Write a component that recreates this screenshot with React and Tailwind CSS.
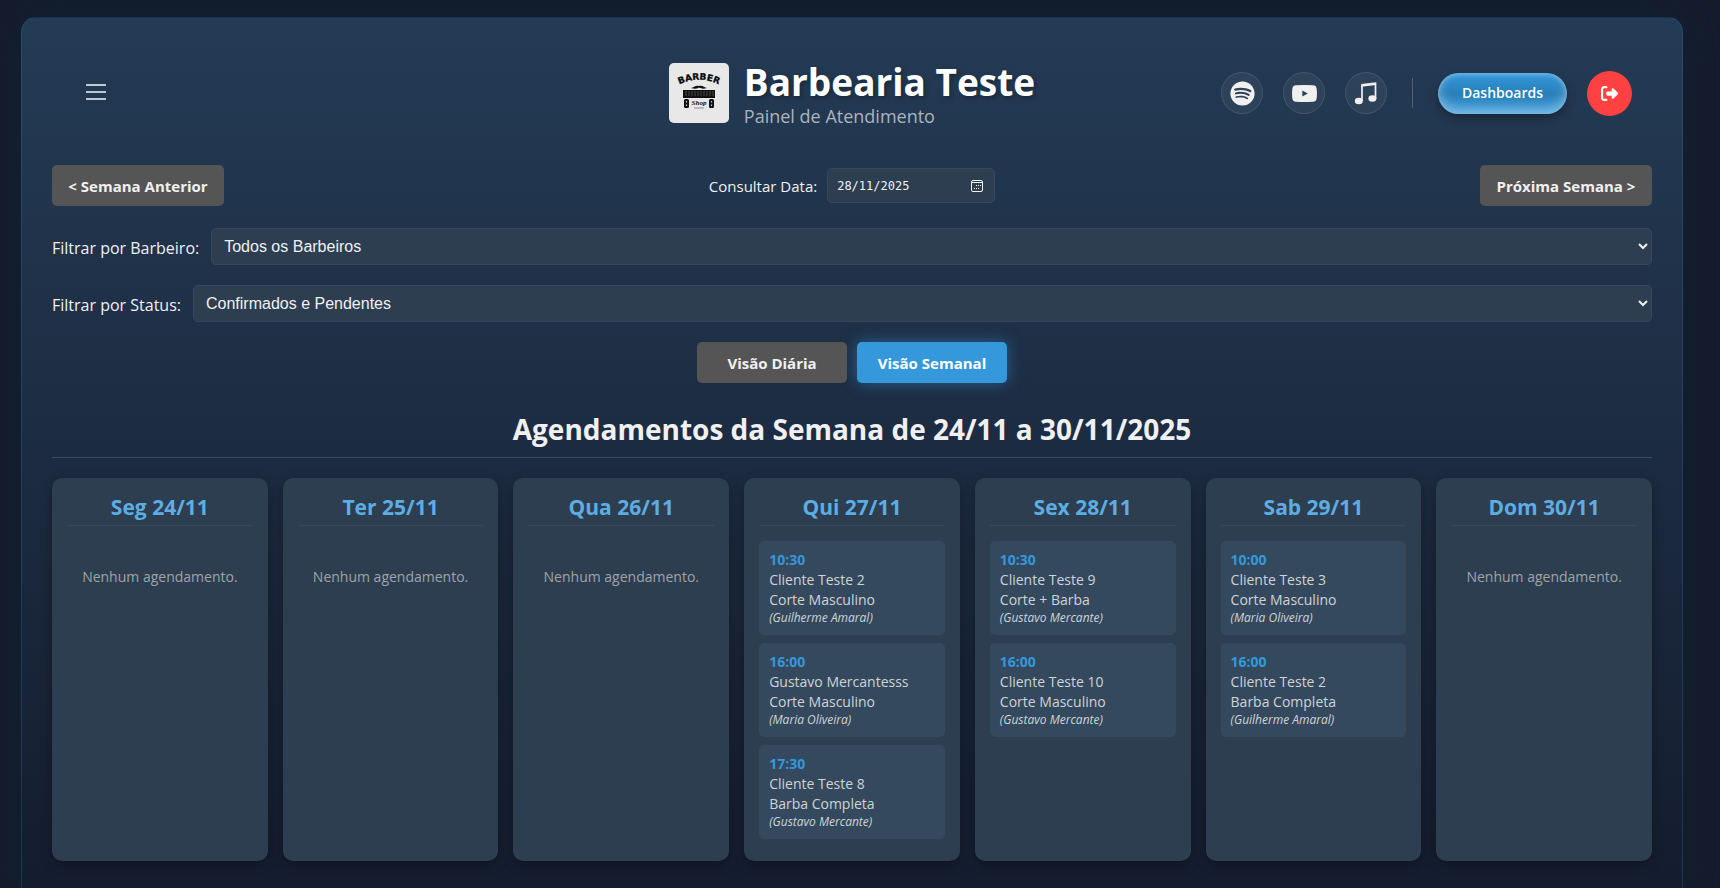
import React, { useState } from 'react';
import { FaSpotify } from 'react-icons/fa';
import { FaRightFromBracket } from 'react-icons/fa6';

const semana = [
  { dia: 'Seg 24/11', agendamentos: [] },
  { dia: 'Ter 25/11', agendamentos: [] },
  { dia: 'Qua 26/11', agendamentos: [] },
  {
    dia: 'Qui 27/11',
    agendamentos: [
      { hora: '10:30', cliente: 'Cliente Teste 2', servico: 'Corte Masculino', barbeiro: 'Guilherme Amaral' },
      { hora: '16:00', cliente: 'Gustavo Mercantesss', servico: 'Corte Masculino', barbeiro: 'Maria Oliveira' },
      { hora: '17:30', cliente: 'Cliente Teste 8', servico: 'Barba Completa', barbeiro: 'Gustavo Mercante' },
    ],
  },
  {
    dia: 'Sex 28/11',
    agendamentos: [
      { hora: '10:30', cliente: 'Cliente Teste 9', servico: 'Corte + Barba', barbeiro: 'Gustavo Mercante' },
      { hora: '16:00', cliente: 'Cliente Teste 10', servico: 'Corte Masculino', barbeiro: 'Gustavo Mercante' },
    ],
  },
  {
    dia: 'Sab 29/11',
    agendamentos: [
      { hora: '10:00', cliente: 'Cliente Teste 3', servico: 'Corte Masculino', barbeiro: 'Maria Oliveira' },
      { hora: '16:00', cliente: 'Cliente Teste 2', servico: 'Barba Completa', barbeiro: 'Guilherme Amaral' },
    ],
  },
  { dia: 'Dom 30/11', agendamentos: [] },
];

const Logo = () => (
  <svg viewBox="0 0 60 60" className="size-15 rounded-[5px] bg-[#e8e8e8]" role="img" aria-label="Barber Shop">
    <defs>
      <path id="arco" d="M7 23Q30 10.500 53 23" />
    </defs>
    <text fontFamily="'DejaVu Sans', sans-serif" fontWeight="700" fontSize="9" fill="#0a0a0a" stroke="#0a0a0a" strokeWidth="0.300">
      <textPath href="#arco" startOffset="50%" textAnchor="middle">BARBER</textPath>
    </text>
    <path d="M22 25c3 0 4-3 8-2 4-1 5 2 8 2-3 1-6 1-8-.5-2 1.500-5 1.500-8 .5z" fill="#111" />
    <rect x="14" y="27" width="32" height="8" fill="#111" />
    <path d="M17 28v5M20 28v5M23 28v5M26 28v5M29 28v5M32 28v5M35 28v5M38 28v5M41 28v5M44 28v5" stroke="#555" strokeWidth="0.800" />
    <rect x="15" y="36" width="5" height="9" rx="1.500" fill="#111" />
    <rect x="40" y="36" width="5" height="9" rx="1.500" fill="#111" />
    <path d="M17.500 38v1.500M17.500 41.500V43M42.500 38v1.500M42.500 41.500V43" stroke="#ccc" strokeWidth="1.200" />
    <text x="30" y="42" textAnchor="middle" fontFamily="'Liberation Serif', serif" fontStyle="italic" fontWeight="700" fontSize="7" fill="#111">Shop</text>
    <path d="M25 45h10" stroke="#777" strokeWidth="0.800" />
  </svg>
);

const IconeYoutube = () => (
  <svg viewBox="0 0 25 17" className="h-[17px] w-[25px]" aria-hidden="true">
    <path fill="currentColor" fillRule="evenodd" d="M4 .3Q12.500-.3 21 .3Q24.500.5 24.700 4Q25.200 8.500 24.700 13Q24.500 16.500 21 16.700Q12.500 17.300 4 16.700Q.5 16.500.3 13Q-.2 8.500.3 4Q.5.5 4 .3ZM10.300 5.500v6l5.500-3z" />
  </svg>
);

const IconeMusica = () => (
  <svg viewBox="0 0 24 24" className="size-6" fill="none" stroke="currentColor" aria-hidden="true">
    <path d="M8 20V4.500M21.500 18V3.500" strokeWidth="1.700" />
    <path d="M7.200 3L22.300 1.300V4L7.200 5.700z" fill="currentColor" stroke="none" />
    <ellipse cx="4.800" cy="20" rx="4" ry="3.200" fill="currentColor" stroke="none" />
    <ellipse cx="18.400" cy="17.500" rx="4" ry="3.200" fill="currentColor" stroke="none" />
  </svg>
);

const IconeCalendario = () => (
  <svg viewBox="0 0 12 12" className="size-3" fill="none" stroke="currentColor" aria-hidden="true">
    <rect x="0.500" y="0.500" width="11" height="11" rx="1.500" />
    <path d="M0.500 2.500h11" />
    <path d="M5 5.500h1M7 5.500h1M9 5.500h1M3 8.500h1M5 8.500h1M7 8.500h1" />
  </svg>
);

const BotaoMidia = ({ titulo, children }) => (
  <button
    type="button"
    aria-label={titulo}
    className="flex size-[42px] items-center justify-center rounded-full border border-white/10 bg-white/5 text-[#f0f0f0]"
  >
    {children}
  </button>
);

const Filtro = ({ id, rotulo, opcoes }) => (
  <div className="mb-5 flex items-center gap-3">
    <label htmlFor={id} className="pt-0.5 text-base">{rotulo}</label>
    <select
      id={id}
      className="h-[37px] min-w-0 flex-1 rounded-[5px] border border-[#34495e] bg-[#2c3e50] px-2 font-['Liberation_Sans',Arial,sans-serif] text-base"
    >
      {opcoes.map((opcao) => (
        <option key={opcao}>{opcao}</option>
      ))}
    </select>
  </div>
);

const Agendamento = ({ item }) => (
  <li className="rounded-[5px] bg-[#34495e] px-2.5 py-[9px] text-sm leading-5 text-[#d0d3d6]">
    <strong className="block text-[#3498db]">{item.hora}</strong>
    <span className="block">{item.cliente}</span>
    <span className="block">{item.servico}</span>
    <em className="block text-xs leading-4">({item.barbeiro})</em>
  </li>
);

const Coluna = ({ dia, agendamentos }) => (
  <section className="rounded-[10px] bg-[#2c3e50] p-[15px] shadow-[0_4px_12px_rgba(0,0,0,0.3)]">
    <h3 className="mb-[15px] border-b border-[#34495e] pb-[3px] text-center text-[21px] leading-[29px] font-bold text-[#5dade2]">
      {dia}
    </h3>
    {agendamentos.length === 0 ? (
      <p className="mt-[41px] text-center text-sm text-[#a0a4a8]">Nenhum agendamento.</p>
    ) : (
      <ul className="mb-[7px] flex flex-col gap-2">
        {agendamentos.map((item) => (
          <Agendamento key={item.hora} item={item} />
        ))}
      </ul>
    )}
  </section>
);

const App = () => {
  const [data, setData] = useState('28/11/2025');
  const [visao, setVisao] = useState('semanal');

  const botao = 'h-[41px] rounded-[5px] pt-0.5 text-[15px] font-bold';
  const ativo = 'bg-[#3498db] text-white shadow-[0_0_15px_rgba(52,152,219,0.5)]';
  const inativo = 'bg-[#555] text-[#f0f0f0]';

  return (
    <div className="h-screen overflow-hidden bg-[#161c2e] pt-[17px] pr-4 font-['Open_Sans','Noto_Sans',sans-serif] text-[#f0f0f0]">
      <main className="mx-auto min-h-screen max-w-[1662px] rounded-[15px] border border-[#3498db]/20 bg-linear-to-b from-[#243b55] to-[#141c2e] px-[30px] pt-[30px] pb-7 shadow-[0_0_40px_rgba(14,34,46,0.9)]">
        <header className="grid h-[90px] grid-cols-[1fr_auto_1fr] items-center px-5">
          <button type="button" aria-label="Menu" className="flex size-12 items-center justify-center text-[#bdc9d0]">
            <svg viewBox="0 0 20 18" className="h-[18px] w-5" stroke="currentColor" strokeWidth="2" aria-hidden="true">
              <path d="M0 1h20M0 8h20M0 15h20" />
            </svg>
          </button>

          <div className="flex items-center gap-[15px]">
            <Logo />
            <div>
              <h1 className="text-[37px] leading-[46px] font-bold text-white [text-shadow:2px_2px_4px_rgba(0,0,0,0.3)]">
                Barbearia Teste
              </h1>
              <p className="text-lg leading-[22px] text-[#aab4be]">Painel de Atendimento</p>
            </div>
          </div>

          <div className="flex items-center justify-end gap-5">
            <BotaoMidia titulo="Spotify"><FaSpotify className="size-[25px]" /></BotaoMidia>
            <BotaoMidia titulo="YouTube"><IconeYoutube /></BotaoMidia>
            <BotaoMidia titulo="Apple Music"><IconeMusica /></BotaoMidia>
            <span className="mx-[5px] h-[30px] w-px bg-white/20" />
            <button
              type="button"
              className="h-[41px] w-[129px] rounded-full bg-linear-to-b from-[#3498db] via-[#2980b9] to-[#3498db] text-sm font-semibold text-white shadow-[0_4px_10px_rgba(0,0,0,0.3),inset_0_2px_4px_rgba(255,255,255,0.25),inset_0_-6px_12px_rgba(255,255,255,0.35)]"
            >
              Dashboards
            </button>
            <button type="button" aria-label="Sair" className="flex size-[45px] items-center justify-center rounded-full bg-[#ff4141] text-white">
              <FaRightFromBracket className="size-[17px]" />
            </button>
          </div>
        </header>

        <div className="mt-[27px] mb-[22px] flex items-center justify-between">
          <button type="button" className={`${botao} ${inativo} w-[172px]`}>&lt; Semana Anterior</button>
          <div className="flex items-center gap-2.5">
            <label htmlFor="data" className="pt-0.5 text-[15px]">Consultar Data:</label>
            <div className="flex h-[35px] w-[168px] items-center rounded-[5px] border border-[#34495e] bg-[#2c3e50] pr-[11px] pl-[9px]">
              <input
                id="data"
                type="text"
                value={data}
                onChange={(e) => setData(e.target.value)}
                className="min-w-0 flex-1 font-['DejaVu_Sans_Mono',monospace] text-xs outline-none"
              />
              <IconeCalendario />
            </div>
          </div>
          <button type="button" className={`${botao} ${inativo} w-[172px]`}>Próxima Semana &gt;</button>
        </div>

        <Filtro id="barbeiro" rotulo="Filtrar por Barbeiro:" opcoes={['Todos os Barbeiros', 'Guilherme Amaral', 'Gustavo Mercante', 'Maria Oliveira']} />
        <Filtro id="status" rotulo="Filtrar por Status:" opcoes={['Confirmados e Pendentes', 'Confirmados', 'Pendentes']} />

        <div className="flex justify-center gap-2.5">
          <button
            type="button"
            onClick={() => setVisao('diaria')}
            className={`${botao} w-[150px] ${visao === 'diaria' ? ativo : inativo}`}
          >
            Visão Diária
          </button>
          <button
            type="button"
            onClick={() => setVisao('semanal')}
            className={`${botao} w-[150px] ${visao === 'semanal' ? ativo : inativo}`}
          >
            Visão Semanal
          </button>
        </div>

        <h2 className="mt-[26px] mb-5 border-b border-[#34495e] pb-2 text-center text-[28px] leading-10 font-bold">
          Agendamentos da Semana de 24/11 a 30/11/2025
        </h2>

        <div className="grid grid-cols-7 gap-[15px]">
          {semana.map((coluna) => (
            <Coluna key={coluna.dia} {...coluna} />
          ))}
        </div>
      </main>
    </div>
  );
};

export default App;
